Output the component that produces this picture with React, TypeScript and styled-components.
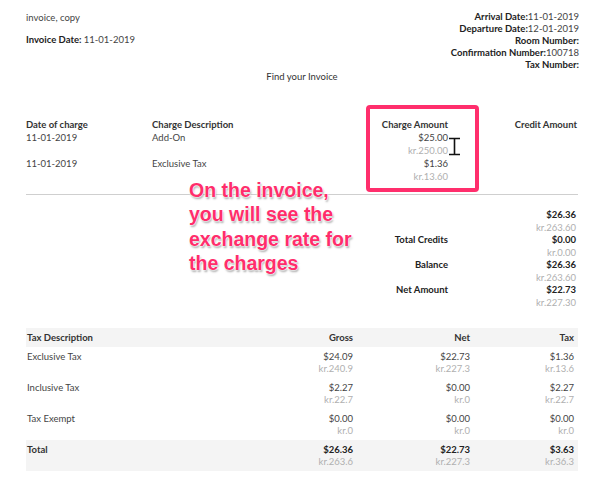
import React from "react";
import styled, { createGlobalStyle } from "styled-components";

const Global = createGlobalStyle`
  html, body { margin: 0; padding: 0; background: #fff; }
  body { font-family: Lato, "Open Sans", sans-serif; color: #333; }
`;

const Page = styled.div`
  position: relative;
  width: 594px;
  height: 482px;
  box-sizing: border-box;
  padding: 11px 16px 0 26px;
  font-size: 9.5px;
  overflow: hidden;
`;

const Header = styled.div`
  display: flex;
  justify-content: space-between;
  align-items: flex-start;
`;

const LeftInfo = styled.div`
  display: flex;
  flex-direction: column;
  gap: 9px;
  line-height: 13px;
  font-size: 9.5px;
`;

const RightInfo = styled.div`
  display: flex;
  flex-direction: column;
  align-items: flex-end;
  line-height: 12px;
  margin-right: -1px;
  font-size: 9.5px;
`;

const Strong = styled.span`
  font-weight: 700;
  color: #222;
`;

const Plain = styled.span`
  color: #444;
`;

const Find = styled.div`
  text-align: center;
  line-height: 12px;
  font-size: 9.5px;
  color: #333;
`;

const ChargeGrid = styled.div`
  display: grid;
  grid-template-columns: 126px 1fr 100px 129px;
  line-height: 13px;
  margin-top: 35px;
  padding-right: 1px;
`;

const Cell = styled.div<{ $align?: "left" | "right"; $bold?: boolean; $gap?: number }>`
  text-align: ${(p) => p.$align ?? "left"};
  font-weight: ${(p) => (p.$bold ? 700 : 400)};
  color: ${(p) => (p.$bold ? "#333" : "#444")};
  padding-bottom: ${(p) => p.$gap ?? 0}px;
`;

const Muted = styled.div`
  color: #b0b0b0;
`;

const Amount = styled.div<{ $bold?: boolean }>`
  font-weight: ${(p) => (p.$bold ? 700 : 400)};
  color: ${(p) => (p.$bold ? "#222" : "#444")};
`;

const Divider = styled.div`
  height: 1px;
  background: #cfcfcf;
  margin-top: 11px;
`;

const Summary = styled.div`
  display: grid;
  grid-template-columns: auto 128px;
  justify-content: end;
  line-height: 12.5px;
  margin-top: 14px;
  padding-right: 2px;
`;

const SumLabel = styled.div`
  text-align: right;
  font-weight: 700;
  color: #222;
`;

const SumValue = styled.div`
  text-align: right;
`;

const TaxTable = styled.div`
  margin-top: 19px;
  display: flex;
  flex-direction: column;
`;

const TaxRow = styled.div<{ $head?: boolean; $shade?: boolean }>`
  display: grid;
  grid-template-columns: 1fr 100px 117px 104px;
  padding: ${(p) => (p.$head ? "0 4px 0 1px" : "4px 4px 0 1px")};
  height: ${(p) => (p.$head ? 19 : 31)}px;
  box-sizing: border-box;
  line-height: ${(p) => (p.$head ? "19px" : "12px")};
  background: ${(p) => (p.$shade ? "#f4f4f4" : "transparent")};
  font-weight: ${(p) => (p.$head ? 700 : 400)};
  color: ${(p) => (p.$head ? "#333" : "#444")};
`;

const Callout = styled.div`
  position: absolute;
  left: 366px;
  top: 105px;
  width: 113px;
  height: 87px;
  box-sizing: border-box;
  border: 4.5px solid #ff2e6c;
  border-radius: 4px;
`;

const Note = styled.div`
  position: absolute;
  left: 189px;
  top: 178px;
  font-family: "Liberation Sans", Arial, sans-serif;
  font-weight: 700;
  font-size: 19.5px;
  line-height: 24.3px;
  color: #ff2d6b;
  text-shadow: 0 0 1px #fff, 0 0 2px #fff, 0 0 2px #fff, 1px 1.5px 2px rgba(0, 0, 0, 0.35);
`;

const Cursor = styled.svg`
  position: absolute;
  left: 448px;
  top: 137px;
`;

const charges = [
  { date: "11-01-2019", desc: "Add-On", usd: "$25.00", kr: "kr.250.00" },
  { date: "11-01-2019", desc: "Exclusive Tax", usd: "$1.36", kr: "kr.13.60" },
];

const summary = [
  { label: "", usd: "$26.36", kr: "kr.263.60" },
  { label: "Total Credits", usd: "$0.00", kr: "kr.0.00" },
  { label: "Balance", usd: "$26.36", kr: "kr.263.60" },
  { label: "Net Amount", usd: "$22.73", kr: "kr.227.30" },
];

type Money = [string, string];
const taxes: { name: string; vals: Money[]; total?: boolean }[] = [
  { name: "Exclusive Tax", vals: [["$24.09", "kr.240.9"], ["$22.73", "kr.227.3"], ["$1.36", "kr.13.6"]] },
  { name: "Inclusive Tax", vals: [["$2.27", "kr.22.7"], ["$0.00", "kr.0"], ["$2.27", "kr.22.7"]] },
  { name: "Tax Exempt", vals: [["$0.00", "kr.0"], ["$0.00", "kr.0"], ["$0.00", "kr.0"]] },
  { name: "Total", vals: [["$26.36", "kr.263.6"], ["$22.73", "kr.227.3"], ["$3.63", "kr.36.3"]], total: true },
];

export default function App() {
  return (
    <>
      <Global />
      <Page>
        <Header>
          <LeftInfo>
            <Plain>invoice, copy</Plain>
            <div>
              <Strong>Invoice Date: </Strong>
              <Plain>11-01-2019</Plain>
            </div>
          </LeftInfo>
          <RightInfo>
            <div><Strong>Arrival Date:</Strong><Plain>11-01-2019</Plain></div>
            <div><Strong>Departure Date:</Strong><Plain>12-01-2019</Plain></div>
            <div><Strong>Room Number:</Strong></div>
            <div><Strong>Confirmation Number:</Strong><Plain>100718</Plain></div>
            <div><Strong>Tax Number:</Strong></div>
          </RightInfo>
        </Header>
        <Find>Find your Invoice</Find>

        <ChargeGrid>
          <Cell $bold>Date of charge</Cell>
          <Cell $bold>Charge Description</Cell>
          <Cell $bold $align="right">Charge Amount</Cell>
          <Cell $bold $align="right">Credit Amount</Cell>
          {charges.map((c, i) => (
            <React.Fragment key={i}>
              <Cell>{c.date}</Cell>
              <Cell>{c.desc}</Cell>
              <Cell $align="right">
                <Amount>{c.usd}</Amount>
                <Muted>{c.kr}</Muted>
              </Cell>
              <Cell />
            </React.Fragment>
          ))}
        </ChargeGrid>
        <Divider />

        <Summary>
          {summary.map((s, i) => (
            <React.Fragment key={i}>
              <SumLabel>{s.label}</SumLabel>
              <SumValue>
                <Amount $bold>{s.usd}</Amount>
                <Muted>{s.kr}</Muted>
              </SumValue>
            </React.Fragment>
          ))}
        </Summary>

        <TaxTable>
          <TaxRow $head $shade>
            <Cell $bold>Tax Description</Cell>
            <Cell $bold $align="right">Gross</Cell>
            <Cell $bold $align="right">Net</Cell>
            <Cell $bold $align="right">Tax</Cell>
          </TaxRow>
          {taxes.map((t) => (
            <TaxRow key={t.name} $shade={t.total}>
              <Cell $bold={t.total}>{t.name}</Cell>
              {t.vals.map((v, j) => (
                <Cell key={j} $align="right">
                  <Amount $bold={t.total}>{v[0]}</Amount>
                  <Muted>{v[1]}</Muted>
                </Cell>
              ))}
            </TaxRow>
          ))}
        </TaxTable>

        <Callout />
        <Cursor width="14" height="20" viewBox="0 0 14 20">
          <path d="M1 1.5H12M1 17.5H12M6.5 1.5V17.5" stroke="#111" strokeWidth="1.6" fill="none" />
        </Cursor>
        <Note>
          On the invoice,
          <br />
          you will see the
          <br />
          exchange rate for
          <br />
          the charges
        </Note>
      </Page>
    </>
  );
}
